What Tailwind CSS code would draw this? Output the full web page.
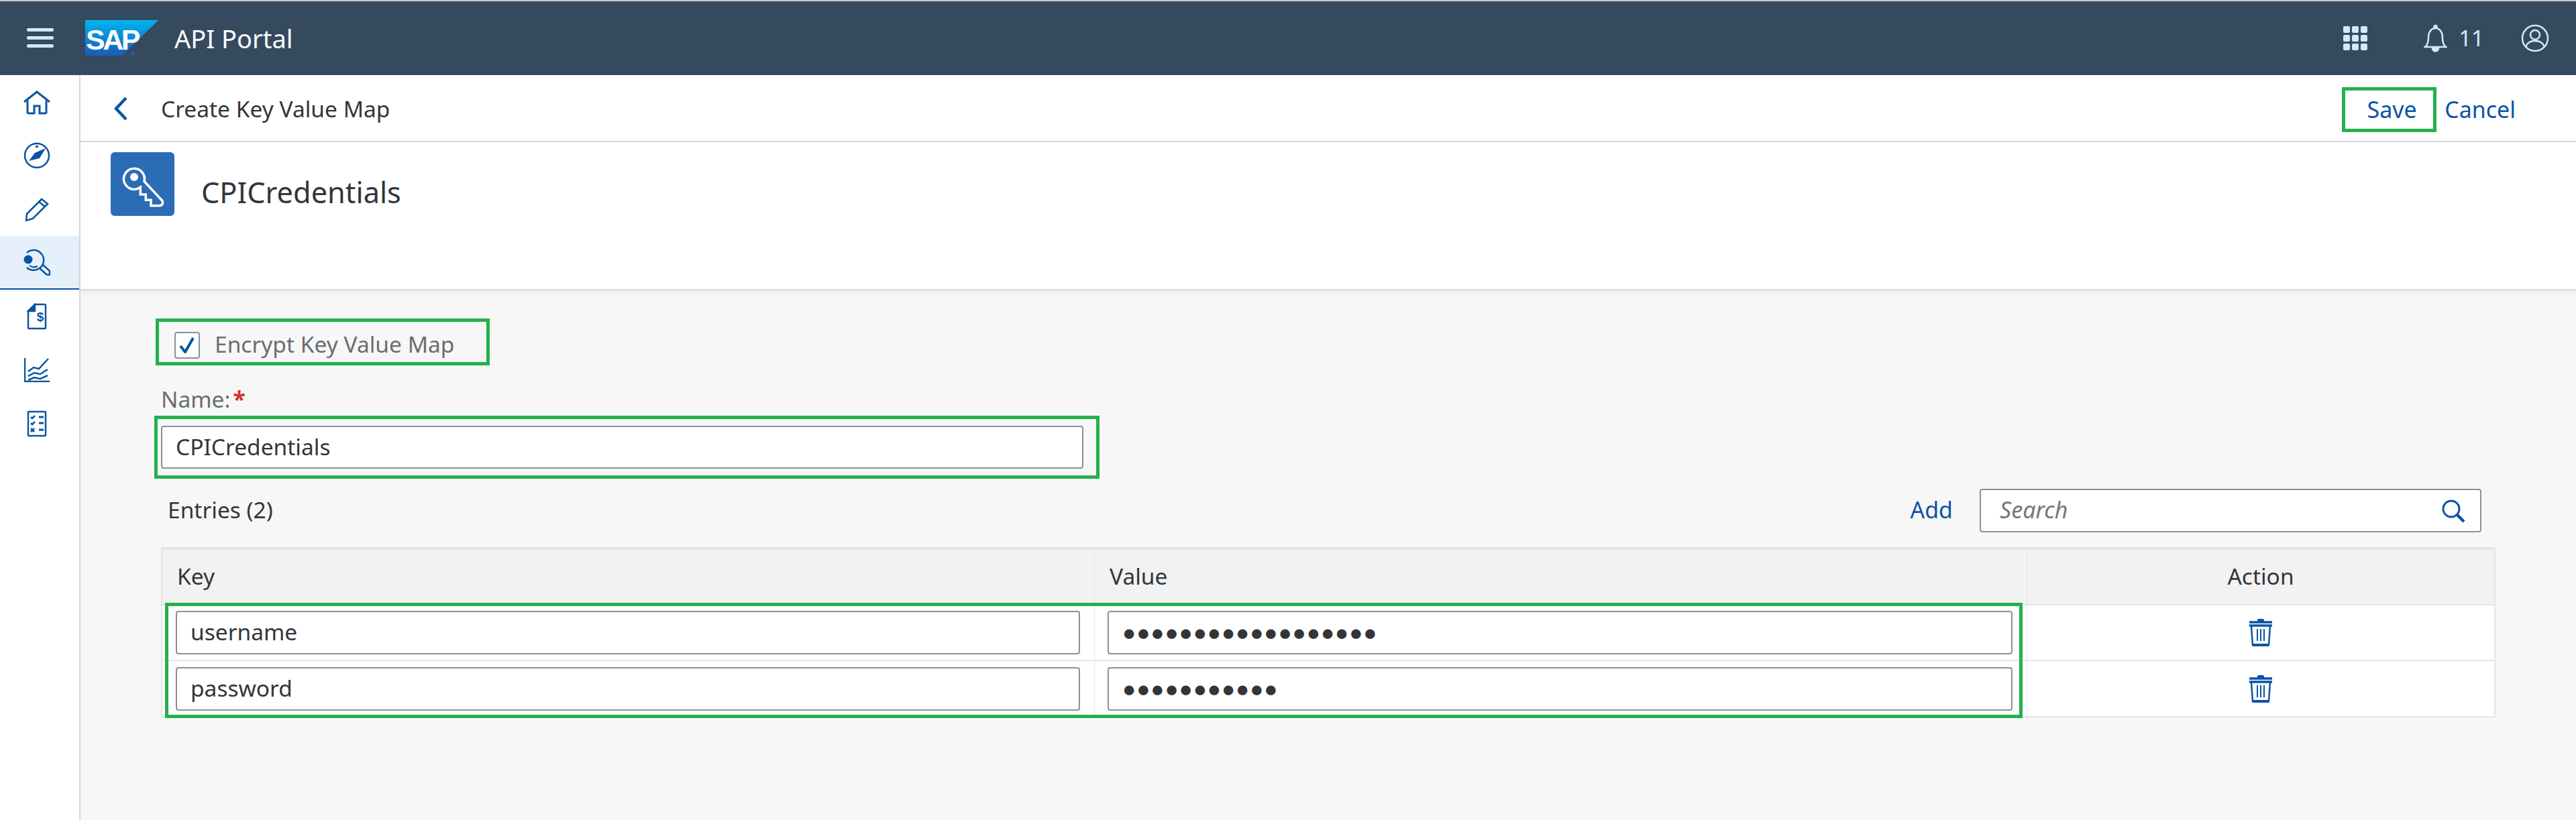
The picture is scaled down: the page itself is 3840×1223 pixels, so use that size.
<!DOCTYPE html>
<html><head><meta charset="utf-8"><script src="https://cdn.jsdelivr.net/npm/@tailwindcss/browser@4"></script></head>
<body class="m-0 bg-[#f7f7f7] font-['Noto_Sans','Open_Sans',sans-serif]">
<div class="relative flex h-[1223px] w-[3840px] flex-col overflow-hidden text-[#32363a]">
  <div class="h-[2px] bg-[#c8c8c8]"></div>
  <header class="flex h-[110px] items-center bg-[#354a5f] pr-[40px]">
    <svg class="ml-[40px] h-[30px] w-[40px]" viewBox="0 0 40 30" fill="#d1e8ff"><rect y="0" width="40" height="5" rx="2"/><rect y="12" width="40" height="5" rx="2"/><rect y="24" width="40" height="5" rx="2"/></svg>
    <svg class="ml-[47px] h-[54px] w-[109px]" viewBox="0 0 109 54"><defs><linearGradient id="g" x1="0" y1="0" x2="0" y2="1"><stop offset="0" stop-color="#00b4f0"/><stop offset="1" stop-color="#1b5cb8"/></linearGradient></defs><path d="M0 0H109L55 53H0Z" fill="url(#g)"/><text x="1" y="44" font-family="Liberation Sans" font-weight="700" font-size="43" letter-spacing="-3.5" fill="#fff">SAP</text><circle cx="71" cy="50" r="3" fill="#1b5cb8"/></svg>
    <span class="ml-[24px] text-[38px] text-white">API Portal</span>
    <svg class="ml-auto h-[36px] w-[36px]" viewBox="0 0 36 36" fill="#d1e8ff"><rect x="0" y="0" width="10" height="10" rx="2"/><rect x="13" y="0" width="10" height="10" rx="2"/><rect x="26" y="0" width="10" height="10" rx="2"/><rect x="0" y="13" width="10" height="10" rx="2"/><rect x="13" y="13" width="10" height="10" rx="2"/><rect x="26" y="13" width="10" height="10" rx="2"/><rect x="0" y="26" width="10" height="10" rx="2"/><rect x="13" y="26" width="10" height="10" rx="2"/><rect x="26" y="26" width="10" height="10" rx="2"/></svg>
    <svg class="ml-[84px] h-[42px] w-[35px]" viewBox="0 0 35 42" fill="none" stroke="#d1e8ff" stroke-width="2.5"><path d="M2 34c4-3 5-7 5-14 0-9 5-14 10.500-14s10.500 5 10.500 14c0 7 1 11 5 14z"/><circle cx="17.500" cy="4" r="2" fill="#d1e8ff"/><path d="M13 36a4.500 4.500 0 0 0 9 0z" fill="#d1e8ff"/></svg>
    <span class="ml-[17px] text-[33px] text-[#d1e8ff]">11</span>
    <svg class="ml-[55px] h-[42px] w-[42px]" viewBox="0 0 42 42" fill="none" stroke="#d1e8ff" stroke-width="2.5"><circle cx="21" cy="21" r="19"/><circle cx="21" cy="16" r="7"/><path d="M7 34c2-6 7-9 14-9s12 3 14 9"/></svg>
  </header>
  <div class="flex flex-1">
    <nav class="w-[120px] shrink-0 border-r-2 border-[#d9d9d9] bg-white text-[#0a54a5]">
      <div class="flex h-[80px] items-center justify-center pr-[8px] pt-[2px]"><svg class="h-[36px] w-[40px]" viewBox="0 0 40 36" fill="none" stroke="#0a54a5" stroke-width="3"><path d="M1 17 20 2l19 15"/><path d="M6 15v18a2 2 0 0 0 2 1h8V23h8v11h8a2 2 0 0 0 2-1V15"/></svg></div>
      <div class="flex h-[80px] items-center justify-center pr-[8px]"><svg class="h-[40px] w-[40px]" viewBox="0 0 40 40"><circle cx="20" cy="20" r="18" fill="none" stroke="#0a54a5" stroke-width="2.5"/><path d="M33 9 24 24 8 28 17 16Z" fill="#0a54a5"/><path d="M20 4l3 4h-6z" fill="#0a54a5"/></svg></div>
      <div class="flex h-[80px] items-center justify-center pr-[8px]"><svg class="h-[36px] w-[36px]" viewBox="0 0 36 36" fill="none" stroke="#0a54a5" stroke-width="2.5"><path d="M3 25 25 3l9 7-22 22-10 3z"/><path d="M21 7l9 7"/></svg></div>
      <div class="flex h-[80px] items-center justify-center border-b-2 border-[#0a54a5] bg-[#e5f0fa] pr-[8px]"><svg class="h-[40px] w-[40px]" viewBox="0 0 40 40" fill="none" stroke="#0a54a5" stroke-width="2.5"><circle cx="7" cy="16" r="6.500" fill="#0a54a5" stroke="none"/><path d="M5 6A15 15 0 1 1 5 28"/><path d="M9 25c4 3 8 3 12 1" stroke-width="2"/><path d="M24 29 35 39h4v-6L28 23"/></svg></div>
      <div class="flex h-[80px] items-center justify-center pr-[8px]"><svg class="h-[40px] w-[30px]" viewBox="0 0 30 40" fill="none" stroke="#0a54a5" stroke-width="2.5"><path d="M12 2h15a1 1 0 0 1 1 1v34a1 1 0 0 1-1 1H3a1 1 0 0 1-1-1V12z"/><path d="M12 2v10H2z" fill="#0a54a5"/><text x="20" y="27" text-anchor="middle" font-size="19" font-weight="700" font-family="Liberation Sans" fill="#0a54a5" stroke="none">$</text></svg></div>
      <div class="flex h-[80px] items-center justify-center pr-[8px]"><svg class="h-[36px] w-[38px]" viewBox="0 0 38 36" fill="none" stroke="#0a54a5" stroke-width="2.5"><path d="M1 0v35h37"/><path d="M6 20l8-6 8 2 14-15M6 27l9-5 9 2 11-7M6 33l9-4 9 2 11-5"/></svg></div>
      <div class="flex h-[80px] items-center justify-center pr-[8px]"><svg class="h-[40px] w-[30px]" viewBox="0 0 30 40" fill="none" stroke="#0a54a5" stroke-width="2.5"><rect x="2" y="2" width="26" height="36" rx="1"/><path d="M6 10l2 2 4-4M6 19l2 2 4-4M6 27l5 5M11 27l-5 5"/><path d="M18 10h7M18 19h7M18 29h7" stroke-width="3"/></svg></div>
    </nav>
    <main class="flex min-w-0 flex-1 flex-col">
      <div class="relative z-10 flex h-[100px] shrink-0 items-center border-b-2 border-[#d9d9d9] bg-white pl-[50px] shadow-[0_4px_8px_rgba(0,0,0,0.05)]">
        <svg class="mt-[1px] h-[36px] w-[20px]" viewBox="0 0 20 36" fill="none" stroke="#0a54a5" stroke-width="4.500"><path d="M18 2 3 18l15 16"/></svg>
        <span class="ml-[50px] mt-[2px] text-[33.5px]">Create Key Value Map</span>
        <div class="ml-auto mr-[90px] mt-[4px] flex h-[67px] items-center text-[34px] text-[#0a54a5]">
          <span class="flex h-[67px] w-[141px] items-center justify-center border-[5px] border-[#22b14c] pl-[8px]">Save</span>
          <span class="ml-[12px]">Cancel</span>
        </div>
      </div>
      <div class="relative z-10 flex h-[221px] shrink-0 border-b-2 border-[#d9d9d9] bg-white pl-[45px] pt-[15px] shadow-[0_4px_8px_rgba(0,0,0,0.05)]">
        <div class="h-[95px] w-[95px] rounded-[6px] bg-[#2a6db5]"><svg class="h-[95px] w-[95px]" viewBox="0 0 95 95" fill="none" stroke="#fff" stroke-width="3.500"><path d="M44.300 63V52.200A15.500 15.500 0 1 1 50 43.500L77 72.500Q79 79 73 79.700H60V71.300H52.300V63Z"/><circle cx="35" cy="37" r="6" fill="#fff" stroke="none"/></svg></div>
        <span class="ml-[40px] mt-[30px] text-[43.3px] leading-[60px]">CPICredentials</span>
      </div>
      <div class="relative flex-1 pl-[120px] pr-[120px]">
        <div class="ml-[-8px] mt-[42px] flex h-[70px] w-[498px] items-center border-[5px] border-[#22b14c] pl-[23px] pt-[10px]">
          <span class="flex h-[40px] w-[38px] items-center justify-center rounded-[4px] border-2 border-[#89919a] bg-white"><svg class="h-[24px] w-[26px]" viewBox="0 0 26 24" fill="none" stroke="#0a54a5" stroke-width="4"><path d="M3 13l7 9L22 1"/></svg></span>
          <span class="ml-[22px] pb-[4px] text-[33.5px] text-[#6a6d70]">Encrypt Key Value Map</span>
        </div>
        <div class="mb-[4px] mt-[29px] flex h-[42px] items-center text-[33.5px] text-[#6a6d70]">Name:<span class="ml-[4px] font-bold text-[#d32f2f]">*</span></div>
        <div class="-ml-[10px] flex h-[94px] w-[1409px] items-center border-[5px] border-[#22b14c] pl-[5px]">
          <div class="flex h-[64px] w-[1375px] items-center rounded-[4px] border-2 border-[#89919a] bg-white pb-[2px] pl-[20px] text-[33.5px]">CPICredentials</div>
        </div>
        <div class="mt-[15px] flex h-[65px] items-center">
          <span class="ml-[10px] pb-[3px] text-[33.5px]">Entries (2)</span>
          <span class="ml-auto pb-[3px] text-[34px] text-[#0a54a5]">Add</span>
          <div class="ml-[40px] mr-[21px] flex h-[65px] w-[748px] items-center rounded-[4px] border-2 border-[#89919a] bg-white pl-[28px] pr-[22px]">
            <span class="pb-[3px] text-[34px] italic text-[#74777a]">Search</span>
            <svg class="ml-auto h-[36px] w-[36px]" viewBox="0 0 36 36" fill="none" stroke="#0a54a5" stroke-width="3"><circle cx="15" cy="15" r="12"/><path d="M24 24 34 34" stroke-width="4.500"/></svg>
          </div>
        </div>
        <div class="relative mt-[22px] w-[3480px] border-x-2 border-b-2 border-t-4 border-[#e5e5e5] bg-white">
          <div class="grid h-[83px] grid-cols-[1390px_1390px_1fr] items-center border-b-2 border-[#e5e5e5] bg-[#f2f2f2] pb-[0px] text-[33.5px]">
            <div class="flex h-full items-center border-r border-[#e5e5e5] pb-[3px] pl-[22px]">Key</div>
            <div class="flex h-full items-center border-r border-[#e5e5e5] pb-[3px] pl-[22px]">Value</div>
            <div class="pb-[3px] text-center">Action</div>
          </div>
          <div class="grid h-[83px] grid-cols-[1390px_1390px_1fr] items-center border-b-2 border-[#e5e5e5]">
            <div class="flex h-full items-center border-r border-[#e5e5e5] pl-[20px]"><div class="flex h-[65px] w-[1348px] items-center rounded-[4px] border-2 border-[#89919a] bg-white pb-[2px] pl-[20px] text-[33.5px]">username</div></div>
            <div class="flex h-full items-center border-r border-[#e5e5e5] pl-[19px]"><div class="flex h-[65px] w-[1349px] items-center rounded-[4px] border-2 border-[#89919a] bg-white pb-[2px] pl-[20px] text-[33.5px] tracking-[0.9px]">●●●●●●●●●●●●●●●●●●</div></div>
            <div class="flex justify-center"><svg class="h-[41px] w-[36px]" viewBox="0 0 36 41" fill="none" stroke="#0a54a5" stroke-width="2.500"><path d="M1 5h34M1 10h34" stroke-width="3.500"/><path d="M14 3a4 3 0 0 1 8 0z" fill="#0a54a5"/><path d="M4 11l2 28h24l2-28"/><path d="M6 39h24" stroke-width="4"/><path d="M13 15v18M18 15v18M23 15v18" stroke-width="2"/></svg></div>
          </div>
          <div class="grid h-[82px] grid-cols-[1390px_1390px_1fr] items-center">
            <div class="flex h-full items-center border-r border-[#e5e5e5] pl-[20px]"><div class="flex h-[65px] w-[1348px] items-center rounded-[4px] border-2 border-[#89919a] bg-white pb-[2px] pl-[20px] text-[33.5px]">password</div></div>
            <div class="flex h-full items-center border-r border-[#e5e5e5] pl-[19px]"><div class="flex h-[65px] w-[1349px] items-center rounded-[4px] border-2 border-[#89919a] bg-white pb-[2px] pl-[20px] text-[33.5px] tracking-[0.9px]">●●●●●●●●●●●</div></div>
            <div class="flex justify-center"><svg class="h-[41px] w-[36px]" viewBox="0 0 36 41" fill="none" stroke="#0a54a5" stroke-width="2.500"><path d="M1 5h34M1 10h34" stroke-width="3.500"/><path d="M14 3a4 3 0 0 1 8 0z" fill="#0a54a5"/><path d="M4 11l2 28h24l2-28"/><path d="M6 39h24" stroke-width="4"/><path d="M13 15v18M18 15v18M23 15v18" stroke-width="2"/></svg></div>
          </div>
          <div class="pointer-events-none absolute left-[4px] top-[79px] h-[172px] w-[2769px] border-[5px] border-[#22b14c]"></div>
        </div>
      </div>
    </main>
  </div>
</div>
</body></html>
